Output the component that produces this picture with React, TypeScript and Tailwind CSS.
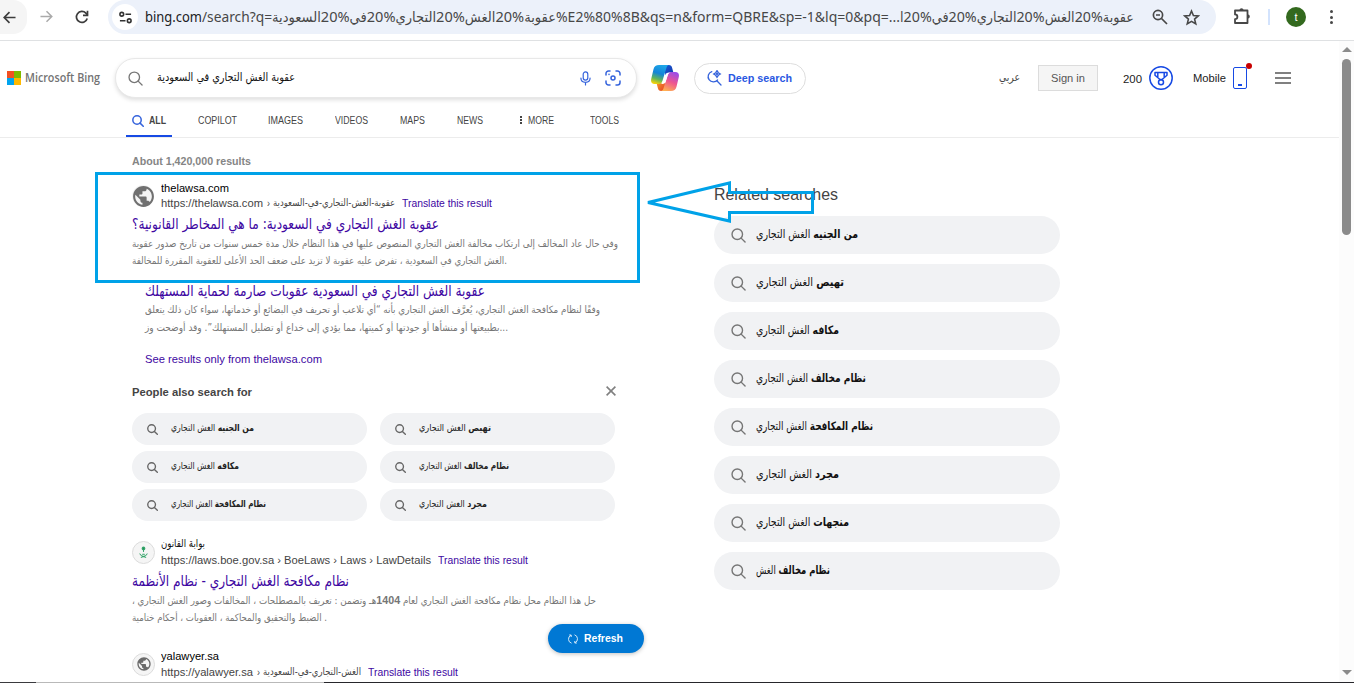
import { useLayoutEffect, useRef, type ReactNode } from "react";

const latin = "font-['Liberation_Sans','DejaVu_Sans',sans-serif]";
const arabic = "font-['DejaVu_Sans_Condensed','DejaVu_Sans',sans-serif]";

/** One line of text, squeezed horizontally to the width of its box. */
function Fit({ className = "", dir = "ltr", children }: { className?: string; dir?: "ltr" | "rtl"; children: ReactNode }) {
  const outer = useRef<HTMLSpanElement>(null);
  const inner = useRef<HTMLSpanElement>(null);
  useLayoutEffect(() => {
    const o = outer.current;
    const i = inner.current;
    if (!o || !i) return;
    i.style.transform = "none";
    const natural = i.getBoundingClientRect().width;
    if (natural > 0) i.style.transform = `scaleX(${o.clientWidth / natural})`;
  });
  return (
    <span ref={outer} className={`flex shrink-0 justify-start ${className}`}>
      <span ref={inner} dir={dir} className="block w-max shrink-0 origin-left whitespace-nowrap">
        {children}
      </span>
    </span>
  );
}

function Magnifier({ className = "", width = 1.5 }: { className?: string; width?: number }) {
  return (
    <svg viewBox="0 0 16 16" className={`shrink-0 ${className}`} fill="none" stroke="currentColor" strokeWidth={width} strokeLinecap="round">
      <circle cx="6.7" cy="6.7" r="5.6" />
      <path d="M10.8 10.8 15 15" />
    </svg>
  );
}

function Globe({ className = "" }: { className?: string }) {
  return (
    <svg viewBox="0 0 24 24" className={`shrink-0 ${className}`} fill="currentColor">
      <path d="M12 2C6.48 2 2 6.48 2 12s4.48 10 10 10 10-4.48 10-10S17.52 2 12 2zm-1 17.93c-3.95-.49-7-3.85-7-7.93 0-.62.08-1.21.21-1.79L9 15v1c0 1.1.9 2 2 2v1.93zm6.9-2.54c-.26-.81-1-1.39-1.9-1.39h-1v-3c0-.55-.45-1-1-1H8v-2h2c.55 0 1-.45 1-1V7h2c1.1 0 2-.9 2-2v-.41c2.93 1.19 5 4.06 5 7.41 0 2.08-.8 3.97-2.1 5.39z" />
    </svg>
  );
}

function BrowserBar() {
  return (
    <div className="flex h-[41px] shrink-0 items-start overflow-hidden border-b border-[#dfe1e3] bg-white text-[#474747]">
      <div className="flex h-[34px] w-[27px] shrink-0 items-center rounded-r-[14px] bg-[#f5f5f5] pl-[3px]">
        <svg viewBox="0 0 14 14" className="h-[13px] w-[13px]" fill="none" stroke="#3c3c3c" strokeWidth="1.8">
          <path d="M13.5 7H1.5M7 1.3 1.3 7 7 12.7" />
        </svg>
      </div>
      <div className="flex h-[34px] w-[13px] shrink-0" />
      <svg viewBox="0 0 14 14" className="mt-[10px] h-[13px] w-[13px] shrink-0" fill="none" stroke="#aaaaaa" strokeWidth="1.6">
        <path d="M.5 7h12M7 1.3 12.7 7 7 12.7" />
      </svg>
      <svg viewBox="0 0 14 14" className="mt-[10px] ml-[22px] h-[14px] w-[14px] shrink-0" fill="none" stroke="#3c3c3c" strokeWidth="1.7">
        <path d="M12.2 8.4A5.5 5.5 0 1 1 10.9 3.1L12.6 5" />
        <path d="M12.5 .7v4.6H8" />
      </svg>
      <div className="ml-[19px] flex h-[34px] w-[1108px] shrink-0 items-center rounded-r-[17px] rounded-l-[17px] bg-[#ecf1fa] pl-[4px]">
        <div className="flex h-[26px] w-[26px] shrink-0 items-center justify-center rounded-full bg-white">
          <svg viewBox="0 0 14 14" className="h-[13px] w-[13px]" fill="none" stroke="#333" strokeWidth="1.7">
            <circle cx="3" cy="3.5" r="2" />
            <path d="M7 3.5h6M1 10.5h6" />
            <circle cx="11" cy="10.5" r="2" />
          </svg>
        </div>
        <div className="ml-[7px] flex h-[26px] items-center font-['Noto_Sans','DejaVu_Sans',sans-serif] text-[14px] leading-[26px]">
          <Fit className="w-[57px] text-[#202124]">bing.com</Fit>
          <Fit className="w-[70px]">/search?q=</Fit>
          <Fit dir="rtl" className="w-[284px] font-['Noto_Sans','DejaVu_Sans_Condensed','DejaVu_Sans',sans-serif]">عقوبة%20الغش%20التجاري%20في%20السعودية</Fit>
          <Fit className="w-[344px]">%E2%80%8B&amp;qs=n&amp;form=QBRE&amp;sp=-1&amp;lq=0&amp;pq=...</Fit>
          <Fit dir="rtl" className="w-[234px] font-['Noto_Sans','DejaVu_Sans_Condensed','DejaVu_Sans',sans-serif]">عقوبة%20الغش%20التجاري%20في%20ا</Fit>
        </div>
        <svg viewBox="0 0 16 16" className="ml-[18px] h-[16px] w-[16px] shrink-0" fill="none" stroke="#474747" strokeWidth="1.7">
          <circle cx="6" cy="6" r="4.6" />
          <path d="M9.5 9.5 15 15M4 6h4" />
        </svg>
        <svg viewBox="0 0 16 16" className="ml-[15px] h-[17px] w-[17px] shrink-0" fill="none" stroke="#474747" strokeWidth="1.5" strokeLinejoin="miter">
          <path d="m8 1.9 1.8 4.2 4.6.4-3.5 3 1.1 4.5L8 11.6 4 14l1.1-4.5-3.5-3 4.6-.4z" />
        </svg>
      </div>
      <svg viewBox="0 0 18 18" className="mt-[7px] ml-[17px] h-[18px] w-[18px] shrink-0" fill="none" stroke="#474747" strokeWidth="1.8">
        <path d="M2 3.5h12.500v12.500H2v-3.800a2.400 2.400 0 0 0 0-4.800z" strokeLinejoin="round" />
        <path d="M6.500 3a2 1.800 0 0 1 4 0zM15 7.500a1.800 2 0 0 1 0 4z" fill="#474747" stroke="none" />
      </svg>
      <div className="mt-[9px] ml-[17px] h-4 w-[2px] shrink-0 bg-[#d3e3fd]" />
      <div className="mt-[7px] ml-[16px] flex h-5 w-5 shrink-0 items-center justify-center rounded-full bg-[#33691e] font-['Liberation_Sans',sans-serif] text-[11px] text-white">t</div>
      <div className="mt-[10px] ml-[24px] flex w-[4px] shrink-0 flex-col gap-[2.500px]">
        <div className="h-[3px] w-[3px] rounded-full bg-[#474747]" />
        <div className="h-[3px] w-[3px] rounded-full bg-[#474747]" />
        <div className="h-[3px] w-[3px] rounded-full bg-[#474747]" />
      </div>
    </div>
  );
}

function CopilotLogo() {
  return (
    <svg viewBox="0 0 28 26" className="h-[26px] w-[28px] shrink-0">
      <defs>
        <linearGradient id="cpA" x1="0.600" y1="0" x2="0.300" y2="1">
          <stop offset="0" stopColor="#1ea7e8" />
          <stop offset="0.450" stopColor="#1384d8" />
          <stop offset="0.750" stopColor="#5fb45c" />
          <stop offset="1" stopColor="#f5d20a" />
        </linearGradient>
        <linearGradient id="cpB" x1="0.700" y1="0" x2="0.300" y2="1">
          <stop offset="0" stopColor="#9b4ce8" />
          <stop offset="0.500" stopColor="#ee5590" />
          <stop offset="1" stopColor="#ffb152" />
        </linearGradient>
        <linearGradient id="cpC" x1="0" y1="0" x2="1" y2="1">
          <stop offset="0" stopColor="#1a5fd8" />
          <stop offset="1" stopColor="#1233a8" />
        </linearGradient>
        <linearGradient id="cpD" x1="0" y1="0" x2="1" y2="1">
          <stop offset="0" stopColor="#f9a12a" />
          <stop offset="1" stopColor="#e23b26" />
        </linearGradient>
      </defs>
      <path d="M13 0h4.800c2 0 2.800 1 3.300 2.800L22.500 8H18c-2.500 0-3 .8-3.600 2.600z" fill="url(#cpC)" />
      <path d="M15 26h-4.800c-2 0-2.800-1-3.300-2.800L5.500 18H10c2.500 0 3-.8 3.600-2.600z" fill="url(#cpD)" />
      <path d="M8 0h10c-1.500.3-2.100 1.200-2.600 2.900l-4 13c-.6 1.900-1.500 3-3.600 3H3.600C.7 18.900-.4 17 .2 14L2.500 4.200C3.300 1.300 5 0 8 0z" fill="url(#cpA)" />
      <path d="M20 26H10c1.500-.3 2.100-1.200 2.600-2.900l4-13c.6-1.900 1.500-3 3.600-3h4.200c2.900 0 4 1.900 3.400 4.900L25.500 21.800c-.8 2.900-2.500 4.200-5.500 4.200z" fill="url(#cpB)" />
      <path d="M14.200 10.600c.8-2.300 1.800-3.100 3.800-3.100h2.200c-2.200 0-2.900 1.300-3.600 3.500l-1.600 4.900c-.7 2.100-1.600 3-3.600 3H9c1.900 0 2.400-1 3-2.900z" fill="#fff" />
    </svg>
  );
}

function Header() {
  return (
    <header className={`h-[97px] shrink-0 border-b border-[#ececec] ${latin}`}>
      <div className="flex h-[74px] items-center pl-[7px]">
        <div className="grid h-[14px] w-[14px] shrink-0 grid-cols-2 grid-rows-2">
          <div className="bg-[#f25022]" />
          <div className="bg-[#7fba00]" />
          <div className="bg-[#00a4ef]" />
          <div className="bg-[#ffb900]" />
        </div>
        <Fit className="ml-[4px] h-5 w-[75px] font-['Open_Sans',sans-serif] text-[12px] leading-5 font-semibold text-[#737373]">Microsoft Bing</Fit>
        <div className="ml-[15px] flex h-[40px] w-[522px] shrink-0 items-center rounded-full border border-[#e8e8e8] bg-white pl-[12px] shadow-[0_2px_4px_rgba(0,0,0,0.13)]">
          <Magnifier className="h-[15px] w-[15px] text-[#767676]" width={1.400} />
          <Fit dir="rtl" className={`ml-[14px] h-5 w-[138px] text-[11.500px] leading-[18px] text-[#111] ${arabic}`}>عقوبة الغش التجاري في السعودية</Fit>
          <svg viewBox="0 0 12 16" className="ml-[285px] h-[15px] w-[11px] shrink-0" fill="none" stroke="#3563dc" strokeWidth="1.300" strokeLinecap="round">
            <rect x="3.500" y="0.800" width="5" height="9" rx="2.500" />
            <path d="M1 7.500c0 6.300 10 6.300 10 0M6 12.500V15" />
          </svg>
          <svg viewBox="0 0 16 16" className="ml-[14px] h-4 w-4 shrink-0" fill="none" stroke="#3563dc" strokeWidth="1.500" strokeLinecap="round">
            <path d="M1 5V3.500A2.500 2.500 0 0 1 3.500 1H5M11 1h1.500A2.500 2.500 0 0 1 15 3.500V5M15 11v1.500a2.500 2.500 0 0 1-2.500 2.500H11M5 15H3.500A2.500 2.500 0 0 1 1 12.500V11" />
            <circle cx="8" cy="8" r="2" />
            <path d="M4 4.300v.1" />
          </svg>
        </div>
        <div className="ml-[14px] flex">
          <CopilotLogo />
        </div>
        <div className="ml-[15px] flex h-[31px] w-[112px] shrink-0 items-center rounded-full border border-[#dedede] pl-[11px]">
          <svg viewBox="0 0 16 16" className="h-4 w-4 shrink-0" fill="none" stroke="#3563dc" strokeWidth="1.300" strokeLinecap="round">
            <path d="M5.800 1.600a5.300 5.300 0 1 0 5.800 8.300M11.300 11.300 15 15" />
            <path d="m11 .7 1.300 2 2 1.300-2 1.300-1.300 2-1.300-2-2-1.300 2-1.300z" />
            <circle cx="11" cy="4" r=".5" />
          </svg>
          <Fit className="ml-[6px] h-4 w-[64px] text-[11px] leading-4 font-bold text-[#2a58e2]">Deep search</Fit>
        </div>
        <Fit dir="rtl" className={`ml-[193px] h-5 w-[21px] text-[11px] leading-5 text-[#444] ${arabic}`}>عربي</Fit>
        <div className="ml-[18px] flex h-[26px] w-[60px] shrink-0 items-center justify-center border border-[#dcdcdc] bg-[#f5f5f5]">
          <Fit className="h-4 w-[34px] text-[11px] leading-4 text-[#555]">Sign in</Fit>
        </div>
        <Fit className="ml-[25px] mt-[2px] h-4 w-[19px] text-[11px] leading-4 text-[#222]">200</Fit>
        <svg viewBox="0 0 24 24" className="ml-[7px] h-6 w-6 shrink-0" fill="none" stroke="#174ae4" strokeWidth="1.500">
          <circle cx="12" cy="12" r="11.200" />
          <path d="M6 6.500h12v2.700l-5 4.300h-2L6 9.200zM8.800 6.500v5.200M15.200 6.500v5.200" strokeLinejoin="round" />
          <circle cx="12" cy="16.200" r="2.500" />
        </svg>
        <Fit className="ml-[20px] h-4 w-[33px] text-[11px] leading-4 text-[#222]">Mobile</Fit>
        <div className="relative ml-[7px] flex h-[22px] w-[14px] shrink-0 items-end justify-center rounded-[2px] border-[1.500px] border-[#174ae4] pb-[2px]">
          <div className="h-[2px] w-1 bg-[#174ae4]" />
          <div className="absolute -top-[5px] -right-[6px] h-[6px] w-[6px] rounded-full bg-[#c80000]" />
        </div>
        <div className="ml-[28px] flex w-4 shrink-0 flex-col gap-[3.500px]">
          <div className="h-[1.500px] bg-[#808080]" />
          <div className="h-[1.500px] bg-[#808080]" />
          <div className="h-[1.500px] bg-[#808080]" />
        </div>
      </div>
      <nav className="flex h-[22px] pl-[126px] text-[10px] leading-[11px] text-[#444]">
        <div className="flex h-[22px] w-[46px] shrink-0 border-b-2 border-[#174ae4] pl-[6px]">
          <Magnifier className="h-[12px] w-[12px] text-[#3563dc]" width={2} />
          <Fit className="ml-[5px] h-[11px] w-[17px] font-bold text-[#444]">ALL</Fit>
        </div>
        <Fit className="ml-[26px] w-[39px]">COPILOT</Fit>
        <Fit className="ml-[31px] w-[35px]">IMAGES</Fit>
        <Fit className="ml-[32px] w-[33px]">VIDEOS</Fit>
        <Fit className="ml-[32px] w-[25px]">MAPS</Fit>
        <Fit className="ml-[32px] w-[26px]">NEWS</Fit>
        <div className="ml-[37px] mt-[1px] flex w-[8px] shrink-0 flex-col gap-[1px]">
          <div className="h-[2px] w-[2px] bg-[#444]" />
          <div className="h-[2px] w-[2px] bg-[#444]" />
          <div className="h-[2px] w-[2px] bg-[#444]" />
        </div>
        <Fit className="w-[26px]">MORE</Fit>
        <Fit className="ml-[36px] w-[29px]">TOOLS</Fit>
      </nav>
    </header>
  );
}

const title = `text-[15px] leading-5 text-[#4007a2] ${arabic}`;
const snippet = `text-[10px] leading-[18px] text-[#767676] ${arabic}`;
const cite = "h-4 text-[11px] leading-4 text-[#444]";
const link = "h-4 text-[10.500px] leading-4 text-[#4007a2]";

const suggestions = [
  { lead: "من الجنيه", w: "w-[83px]" },
  { lead: "تهيص", w: "w-[72px]" },
  { lead: "مكافه", w: "w-[68px]" },
  { lead: "نظام مخالف", w: "w-[90px]" },
  { lead: "نظام المكافحة", w: "w-[95px]" },
  { lead: "مجرد", w: "w-[68px]" },
];

const related = [
  { lead: "من الجنيه", rest: "الغش التجاري", w: "w-[102px]" },
  { lead: "تهيص", rest: "الغش التجاري", w: "w-[88px]" },
  { lead: "مكافه", rest: "الغش التجاري", w: "w-[83px]" },
  { lead: "نظام مخالف", rest: "الغش التجاري", w: "w-[110px]" },
  { lead: "نظام المكافحة", rest: "الغش التجاري", w: "w-[117px]" },
  { lead: "مجرد", rest: "الغش التجاري", w: "w-[83px]" },
  { lead: "منجهات", rest: "الغش التجاري", w: "w-[93px]" },
  { lead: "نظام مخالف", rest: "الغش", w: "w-[74px]" },
];

function Results() {
  return (
    <main className={`w-[582px] shrink-0 ${latin}`}>
      <Fit className="mt-[15px] h-4 w-[119px] text-[11px] leading-4 font-bold text-[#858585]">About 1,420,000 results</Fit>

      <div className="mt-[11px] flex h-[32px] items-center">
        <div className="mr-[7px] flex h-[22px] w-[22px] shrink-0 items-center justify-center rounded-full bg-[#f4f4f4]">
          <Globe className="h-[25px] w-[25px] text-[#707070]" />
        </div>
        <div className="flex flex-col">
          <Fit className="h-[15px] w-[68px] text-[11px] leading-4 text-black">thelawsa.com</Fit>
          <div className="flex h-[17px] items-start">
            <Fit className={`w-[102px] ${cite}`}>https://thelawsa.com</Fit>
            <Fit className={`ml-[4px] w-[3px] ${cite}`}>›</Fit>
            <Fit dir="rtl" className={`ml-[3px] h-4 w-[122px] text-[10px] leading-[15px] text-[#444] ${arabic}`}>عقوبة-الغش-التجاري-في-السعودية</Fit>
            <Fit className={`ml-[7px] w-[90px] ${link}`}>Translate this result</Fit>
          </div>
        </div>
      </div>
      <Fit dir="rtl" className={`mt-[2px] h-[21px] w-[307px] ${title}`}>عقوبة الغش التجاري في السعودية: ما هي المخاطر القانونية؟</Fit>
      <Fit dir="rtl" className={`h-[17px] w-[486px] ${snippet}`}>وفي حال عاد المخالف إلى ارتكاب مخالفة الغش التجاري المنصوص عليها في هذا النظام خلال مدة خمس سنوات من تاريخ صدور عقوبة</Fit>
      <Fit className={`h-[18px] w-[375px] ${snippet}`}>الغش التجاري في السعودية ، تفرض عليه عقوبة لا تزيد على ضعف الحد الأعلى للعقوبة المقررة للمخالفة.</Fit>

      <div className="mt-[11px] ml-[13px]">
        <Fit dir="rtl" className={`h-[20px] w-[340px] ${title}`}>عقوبة الغش التجاري في السعودية عقوبات صارمة لحماية المستهلك</Fit>
        <Fit dir="rtl" className={`h-[18px] w-[455px] ${snippet}`}>وفقًا لنظام مكافحة الغش التجاري، يُعرَّف الغش التجاري بأنه “أي تلاعب أو تحريف في البضائع أو خدماتها، سواء كان ذلك يتعلق</Fit>
        <Fit className={`h-[18px] w-[363px] ${snippet}`}>بطبيعتها أو منشأها أو جودتها أو كميتها، مما يؤدي إلى خداع أو تضليل المستهلك”. وقد أوضحت وز...</Fit>
        <Fit className="mt-[14px] h-4 w-[177px] text-[11px] leading-4 text-[#4007a2]">See results only from thelawsa.com</Fit>
      </div>

      <div className="mt-[17px] flex h-4 w-[484px] items-center justify-between">
        <Fit className="h-4 w-[120px] text-[11px] leading-4 font-bold text-[#444]">People also search for</Fit>
        <svg viewBox="0 0 10 10" className="mb-[2px] h-[10px] w-[10px]" stroke="#808080" strokeWidth="1.600">
          <path d="m.6.6 8.800 8.800M9.400.6.6 9.400" />
        </svg>
      </div>
      <div className="mt-[13px] grid w-[483px] grid-cols-2 gap-x-[13px] gap-y-[6px]">
        {suggestions.map((s) => (
          <div key={s.lead} className="flex h-8 items-center rounded-full bg-[#f1f2f4] pl-[15px]">
            <Magnifier className="h-[11px] w-[11px] text-[#666]" width={2} />
            <Fit dir="rtl" className={`ml-[13px] h-4 text-[9.500px] leading-[14px] text-[#222] ${s.w} ${arabic}`}>
              <b>{s.lead}</b> الغش التجاري
            </Fit>
          </div>
        ))}
      </div>

      <div className="mt-[15px] flex h-[32px] items-center">
        <div className="mr-[6px] flex h-[23px] w-[23px] shrink-0 items-center justify-center rounded-full border border-[#dcdcdc] bg-[#f5f5f5]">
          <svg viewBox="0 0 12 14" className="h-[13px] w-[11px]" fill="none" stroke="#35a56b" strokeWidth="1.100" strokeLinecap="round">
            <path d="M6 2.500V6" />
            <circle cx="6" cy="2.500" r="1.500" fill="#1f9457" />
            <path d="M2 8.500C3.500 11.500 6 11 8.500 12.300M10 8.500C8.500 11.500 6 11 3.500 12.300M5 9h2" />
          </svg>
        </div>
        <div className="flex flex-col">
          <Fit dir="rtl" className={`h-4 w-[44px] text-[10.500px] leading-[15px] text-[#111] ${arabic}`}>بوابة القانون</Fit>
          <div className="flex h-4 items-center">
            <Fit className={`w-[270px] ${cite}`}>https://laws.boe.gov.sa › BoeLaws › Laws › LawDetails</Fit>
            <Fit className={`ml-[7px] w-[90px] ${link}`}>Translate this result</Fit>
          </div>
        </div>
      </div>
      <Fit dir="rtl" className={`mt-[3px] h-[20px] w-[217px] ${title}`}>نظام مكافحة الغش التجاري - نظام الأنظمة</Fit>
      <Fit dir="rtl" className={`h-[18px] w-[464px] ${snippet}`}>حل هذا النظام محل نظام مكافحة الغش التجاري لعام <span className="font-['Liberation_Sans',sans-serif] text-[11px] font-bold">1404</span>هـ وتضمن : تعريف بالمصطلحات ، المخالفات وصور الغش التجاري ،</Fit>
      <Fit className={`h-[18px] w-[195px] ${snippet}`}>الضبط والتحقيق والمحاكمة ، العقوبات ، أحكام ختامية .</Fit>

      <div className="mt-[21px] flex h-[32px] items-center">
        <div className="mr-[6px] flex h-[23px] w-[23px] shrink-0 items-center justify-center rounded-full border border-[#dcdcdc] bg-[#f5f5f5]">
          <Globe className="h-[16px] w-[16px] text-[#6b6b6b]" />
        </div>
        <div className="flex flex-col">
          <Fit className="h-4 w-[58px] text-[11px] leading-4 text-black">yalawyer.sa</Fit>
          <div className="flex h-4 items-center">
            <Fit className={`w-[92px] ${cite}`}>https://yalawyer.sa</Fit>
            <Fit className={`ml-[4px] w-[3px] ${cite}`}>›</Fit>
            <Fit dir="rtl" className={`ml-[3px] h-4 w-[98px] text-[10px] leading-[15px] text-[#444] ${arabic}`}>الغش-التجاري-في-السعودية</Fit>
            <Fit className={`ml-[7px] w-[90px] ${link}`}>Translate this result</Fit>
          </div>
        </div>
      </div>
    </main>
  );
}

function Related() {
  return (
    <aside className="w-[346px] shrink-0">
      <Fit className={`mt-[46px] h-[22px] w-[124px] text-[17px] leading-[22px] text-[#444] ${latin}`}>Related searches</Fit>
      <div className="mt-[10px] flex flex-col gap-[10px]">
        {related.map((r) => (
          <div key={r.lead + r.rest} className="flex h-[38px] items-center rounded-full bg-[#f1f2f4] pl-[17px]">
            <Magnifier className="mt-px h-[15px] w-[15px] text-[#767676]" width={1.500} />
            <Fit dir="rtl" className={`ml-[10px] h-5 text-[11.500px] leading-[18px] text-[#111] ${r.w} ${arabic}`}>
              <b>{r.lead}</b> {r.rest}
            </Fit>
          </div>
        ))}
      </div>
    </aside>
  );
}

export default function App() {
  return (
    <div className="relative flex h-[683px] w-[1354px] flex-col overflow-hidden bg-white">
      <BrowserBar />
      <div className="flex h-[641px] shrink-0">
        <div className="flex w-[1339px] shrink-0 flex-col overflow-hidden">
          <Header />
          <div className="flex pl-[132px]">
            <Results />
            <Related />
          </div>
        </div>
        <div className="flex w-[15px] shrink-0 flex-col items-center bg-[#fcfcfc] pt-[6px] pb-[7px]">
          <svg viewBox="0 0 10 5" className="h-[5px] w-[10px] shrink-0">
            <path d="M0 5 5 0l5 5z" fill="#8b8b8b" />
          </svg>
          <div className="mt-[7px] h-[176px] w-[9px] shrink-0 rounded-full bg-[#8b8b8b]" />
          <svg viewBox="0 0 10 5" className="mt-auto h-[5px] w-[10px] shrink-0">
            <path d="M0 0l5 5 5-5z" fill="#8b8b8b" />
          </svg>
        </div>
      </div>
      <div className="flex h-px shrink-0 bg-[#26262b]">
        <div className="h-px w-[36px] bg-[#3a3a3e]" />
        <div className="h-px w-[288px] bg-[#b9b9b9]" />
      </div>

      <div className="absolute top-[172px] left-[95px] h-[111px] w-[545px] border-[3px] border-[#00a2e8]" />
      <svg viewBox="0 0 172 44" className="absolute top-[180px] left-[644px] h-[44px] w-[172px]" fill="none" stroke="#00a2e8" strokeWidth="3">
        <path d="M4 22.500 85.500 3v9.500h83v20h-83V41z" />
      </svg>
      <div className={`absolute top-[624px] left-[548px] flex h-[29px] w-[96px] items-center rounded-full bg-[#0078d4] pl-[20px] shadow-[0_1px_4px_rgba(0,0,0,0.25)] ${latin}`}>
        <svg viewBox="0 0 10 10" className="h-[10px] w-[10px] shrink-0" fill="none" stroke="#d5e9f8" strokeWidth="1">
          <path d="M3.500 9.200A4.300 4.300 0 0 1 3 1.200M6.500.8a4.300 4.300 0 0 1 .5 8M1.200 1h2v2M8.800 9h-2V7" />
        </svg>
        <Fit className="ml-[6px] mb-px h-4 w-[39px] text-[11px] leading-4 font-bold text-white">Refresh</Fit>
      </div>
    </div>
  );
}
